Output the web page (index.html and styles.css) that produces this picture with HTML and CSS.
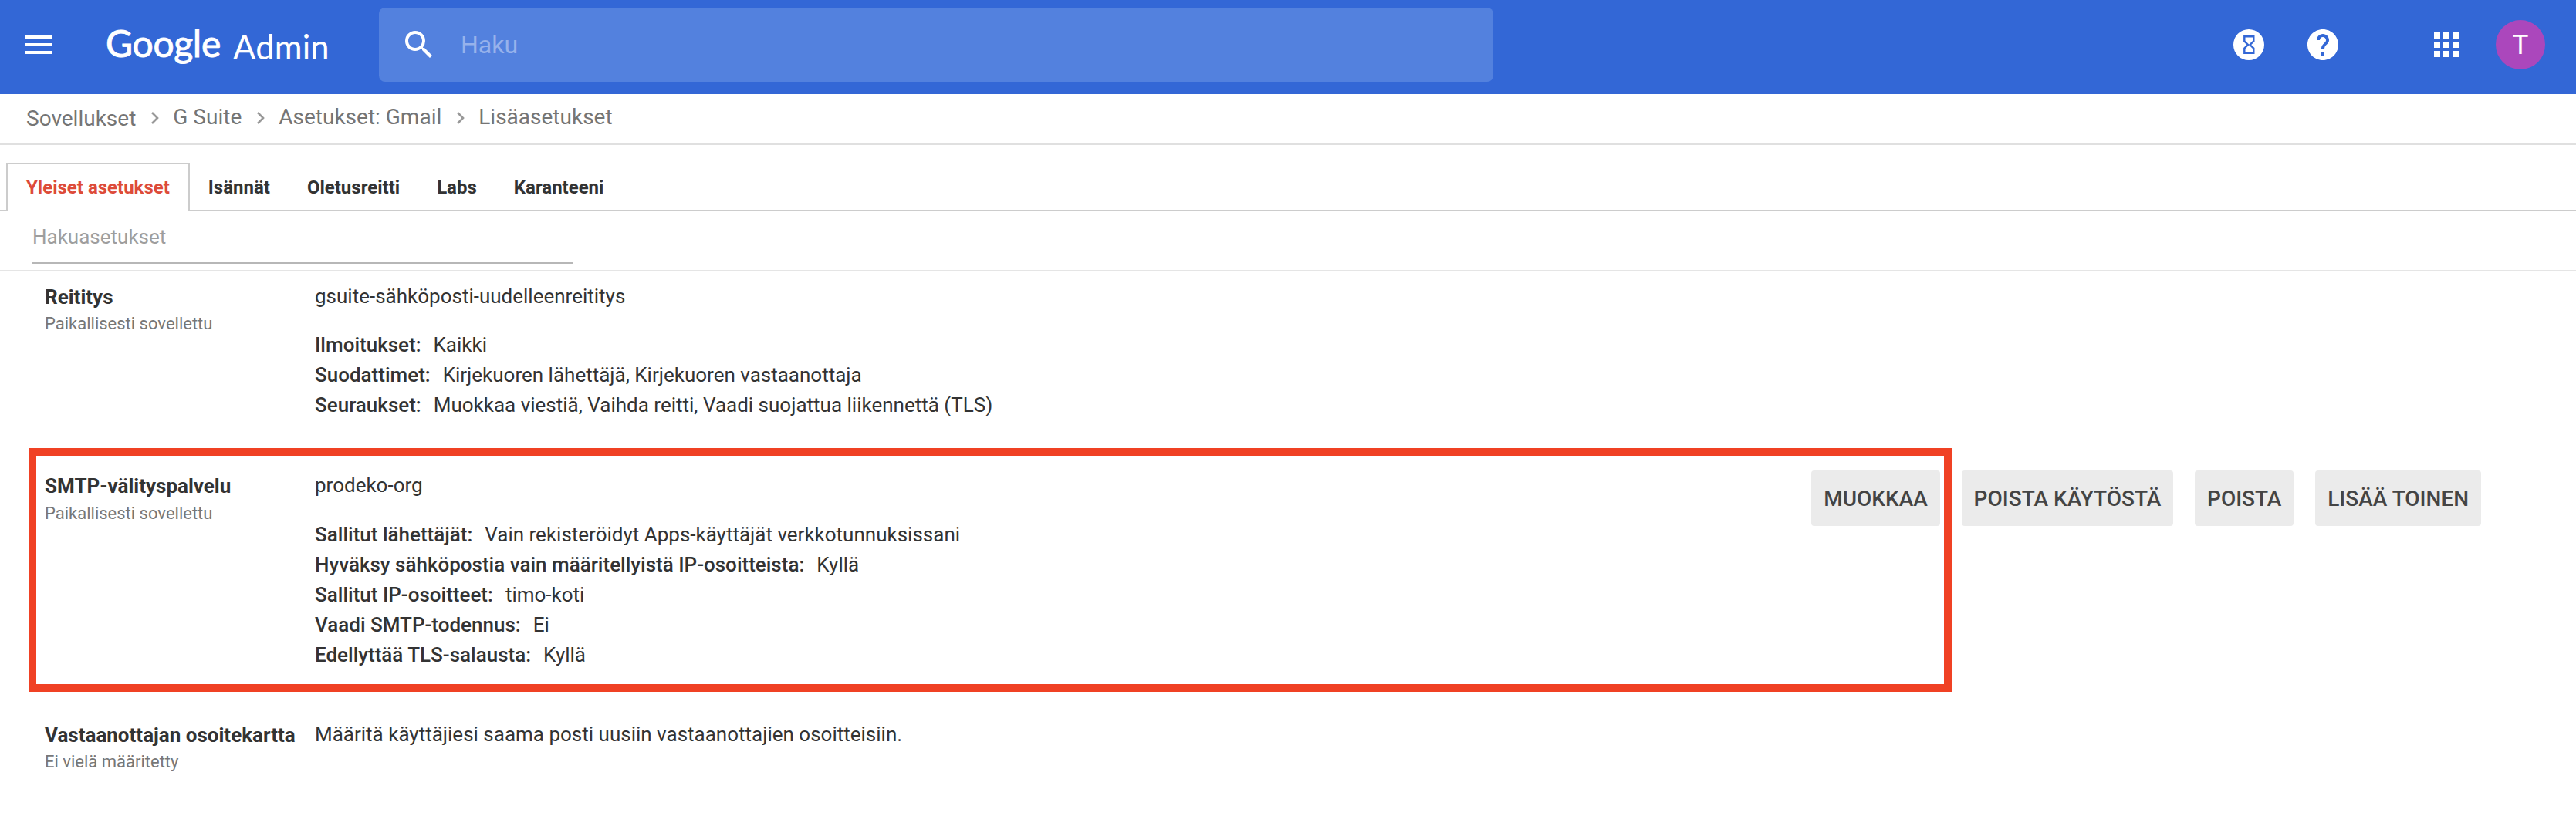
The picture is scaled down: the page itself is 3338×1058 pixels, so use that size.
FILE: index.html
```html
<!DOCTYPE html>
<html lang="fi">
<head>
<meta charset="utf-8">
<title>Google Admin</title>
<link rel="stylesheet" href="styles.css">
</head>
<body>
<header class="topbar">
  <svg class="menu-icon" width="36" height="24" viewBox="0 0 36 24"><path d="M0 0h36v4H0zM0 10h36v4H0zM0 20h36v4H0z"/></svg>
  <div class="logo"><span class="logo-google">Google</span><span class="logo-admin">Admin</span></div>
  <div class="search">
    <svg width="48" height="48" viewBox="0 0 24 24"><path d="M15.5 14h-.79l-.28-.27A6.471 6.471 0 0 0 16 9.5 6.5 6.5 0 1 0 9.5 16c1.61 0 3.09-.59 4.23-1.57l.27.28v.79l5 4.99L20.49 19l-4.99-5zm-6 0C7.01 14 5 11.99 5 9.5S7.01 5 9.5 5 14 7.01 14 9.5 11.99 14 9.5 14z"/></svg>
    <span class="search-text">Haku</span>
  </div>
  <div class="tools">
    <svg class="tool-hourglass" width="48" height="48" viewBox="0 0 48 48"><circle cx="24" cy="24" r="20"/><path class="glass" d="M18.3 13.2h12v6.2L25.6 24l4.7 4.6v6.2h-12v-6.2L23 24l-4.700-4.600z"/></svg>
    <svg class="tool-help" width="48" height="48" viewBox="0 0 24 24"><path d="M12 2C6.480 2 2 6.480 2 12s4.480 10 10 10 10-4.480 10-10S17.520 2 12 2zm1 17h-2v-2h2v2zm2.070-7.750l-.9.920C13.450 12.900 13 13.500 13 15h-2v-.5c0-1.100.450-2.100 1.170-2.830l1.240-1.260c.370-.360.590-.860.590-1.410 0-1.100-.9-2-2-2s-2 .9-2 2H8c0-2.210 1.790-4 4-4s4 1.790 4 4c0 .880-.360 1.680-.930 2.250z"/></svg>
    <svg class="tool-apps" width="48" height="48" viewBox="0 0 24 24"><path d="M4 8h4V4H4v4zm6 12h4v-4h-4v4zm-6 0h4v-4H4v4zm0-6h4v-4H4v4zm6 0h4v-4h-4v4zm6-10v4h4V4h-4zm-6 4h4V4h-4v4zm6 6h4v-4h-4v4zm0 6h4v-4h-4v4z"/></svg>
    <span class="avatar">T</span>
  </div>
</header>
<nav class="crumbs">
  <span class="crumb crumb-root">Sovellukset</span>
  <svg class="chevron" width="10" height="16" viewBox="0 0 10 16"><path d="M1 1l7 7-7 7"/></svg>
  <span class="crumb">G Suite</span>
  <svg class="chevron" width="10" height="16" viewBox="0 0 10 16"><path d="M1 1l7 7-7 7"/></svg>
  <span class="crumb">Asetukset: Gmail</span>
  <svg class="chevron" width="10" height="16" viewBox="0 0 10 16"><path d="M1 1l7 7-7 7"/></svg>
  <span class="crumb">Lisäasetukset</span>
</nav>
<nav class="tabs">
  <a class="tab tab-active">Yleiset asetukset</a>
  <a class="tab">Isännät</a>
  <a class="tab">Oletusreitti</a>
  <a class="tab">Labs</a>
  <a class="tab">Karanteeni</a>
</nav>
<div class="filter"><div class="filter-field">Hakuasetukset</div></div>
<main>
  <section class="row">
    <div class="name"><h2>Reititys</h2><p>Paikallisesti sovellettu</p></div>
    <div class="content">
      <p class="summary">gsuite-sähköposti-uudelleenreititys</p>
      <dl>
        <div><dt>Ilmoitukset:</dt><dd>Kaikki</dd></div>
        <div><dt>Suodattimet:</dt><dd>Kirjekuoren lähettäjä, Kirjekuoren vastaanottaja</dd></div>
        <div><dt>Seuraukset:</dt><dd>Muokkaa viestiä, Vaihda reitti, Vaadi suojattua liikennettä (TLS)</dd></div>
      </dl>
    </div>
  </section>
  <section class="row row-marked">
    <div class="name"><h2>SMTP-välityspalvelu</h2><p>Paikallisesti sovellettu</p></div>
    <div class="content">
      <p class="summary">prodeko-org</p>
      <dl>
        <div><dt>Sallitut lähettäjät:</dt><dd>Vain rekisteröidyt Apps-käyttäjät verkkotunnuksissani</dd></div>
        <div><dt>Hyväksy sähköpostia vain määritellyistä IP-osoitteista:</dt><dd>Kyllä</dd></div>
        <div><dt>Sallitut IP-osoitteet:</dt><dd>timo-koti</dd></div>
        <div><dt>Vaadi SMTP-todennus:</dt><dd>Ei</dd></div>
        <div><dt>Edellyttää TLS-salausta:</dt><dd>Kyllä</dd></div>
      </dl>
    </div>
    <div class="actions">
      <button>MUOKKAA</button>
      <button>POISTA KÄYTÖSTÄ</button>
      <button>POISTA</button>
      <button>LISÄÄ TOINEN</button>
    </div>
    <div class="marker"></div>
  </section>
  <section class="row">
    <div class="name"><h2>Vastaanottajan osoitekartta</h2><p>Ei vielä määritetty</p></div>
    <div class="content"><p class="summary">Määritä käyttäjiesi saama posti uusiin vastaanottajien osoitteisiin.</p></div>
  </section>
</main>
</body>
</html>
```
FILE: styles.css
```css
* { box-sizing: border-box; }
body {
  margin: 0;
  height: 1058px;
  overflow: hidden;
  background: #fff;
  color: #333;
  font: 26px/39px Roboto, "Liberation Sans", sans-serif;
}
h2, p, dl, dd { margin: 0; }

.topbar {
  display: flex;
  height: 122px;
  padding: 10px 40px 0 32px;
  background: #3367d6;
  fill: #fff;
}
.menu-icon { margin-top: 36px; }
.logo {
  display: flex;
  width: 423px;
  padding-left: 69px;
  color: #fff;
  font-family: Lato, sans-serif;
  line-height: 60px;
}
.logo-google {
  width: 165px;
  padding-top: 16px;
  font-size: 48px;
  letter-spacing: -0.3px;
  -webkit-text-stroke: 0.9px #fff;
}
.logo-admin { padding-top: 20px; font-size: 43.5px; letter-spacing: 0.2px; }
.search {
  display: flex;
  align-items: center;
  width: 1444px;
  height: 96px;
  padding-left: 28px;
  border-radius: 8px;
  background: #5381de;
}
.search-text { margin-left: 30px; color: #97b2eb; font-size: 32px; }
.tools {
  display: flex;
  align-items: center;
  height: 96px;
  margin-left: auto;
}
.tool-help { margin-left: 48px; }
.tool-apps { margin-left: 112px; }
.glass { fill: none; stroke: #3367d6; stroke-width: 2.4; }
.avatar {
  width: 64px;
  height: 64px;
  margin-left: 40px;
  border-radius: 50%;
  background: #ab47bc;
  color: #fff;
  font-size: 35px;
  line-height: 66px;
  text-align: center;
}

.crumbs {
  display: flex;
  align-items: flex-start;
  height: 66px;
  padding: 10px 0 0 34px;
  border-bottom: 2px solid #e0e0e0;
  color: #757575;
  font-size: 28px;
  line-height: 40px;
}
.crumb-root { padding-top: 2px; }
.chevron { margin: 13px 18px 0 20px; fill: none; stroke: #999; stroke-width: 2.6; }

.tabs {
  display: flex;
  height: 86px;
  padding: 23px 0 0 8px;
  font-size: 24px;
  font-weight: 700;
  line-height: 65px;
  box-shadow: inset 0 -2px #ccc;
}
.tab { height: 63px; padding: 0 24px; }
.tab-active {
  border: 2px solid #ccc;
  border-bottom: 0;
  background: #fff;
  color: #dd4b39;
  line-height: 61px;
}

.filter { height: 78px; padding: 0 42px; border-bottom: 2px solid #e5e5e5; }
.filter-field {
  width: 700px;
  height: 68px;
  padding-top: 14px;
  border-bottom: 2px solid #b7b7b7;
  color: #9e9e9e;
}

.row {
  display: grid;
  grid-template-columns: 350px 1fr auto;
  padding: 13px 123px 52px 58px;
}
.name { padding-top: 1px; }
.name h2 { font-size: 26px; font-weight: 700; line-height: 39px; white-space: nowrap; }
.name p { padding-top: 1px; color: #777; font-size: 22px; line-height: 28px; }
dl { margin-top: 24px; }
dl div { display: flex; gap: 16px; }
dt { font-weight: 500; }
.actions { display: flex; align-items: flex-start; gap: 28px; }
button {
  height: 72px;
  padding: 1px 15.9px 0;
  border: 0;
  border-radius: 4px;
  background: #ebebeb;
  color: #444;
  font: 500 28px/71px Roboto, "Liberation Sans", sans-serif;
}
.row-marked { position: relative; padding-bottom: 51px; }
.row-marked .name p { padding-top: 2px; }
.row-marked dl { margin-top: 25px; }
/* Red frame laid over the highlighted setting */
.marker {
  position: absolute;
  top: -16px;
  left: 37px;
  width: 2492px;
  height: 316px;
  border: 10px solid #f04124;
}
```
